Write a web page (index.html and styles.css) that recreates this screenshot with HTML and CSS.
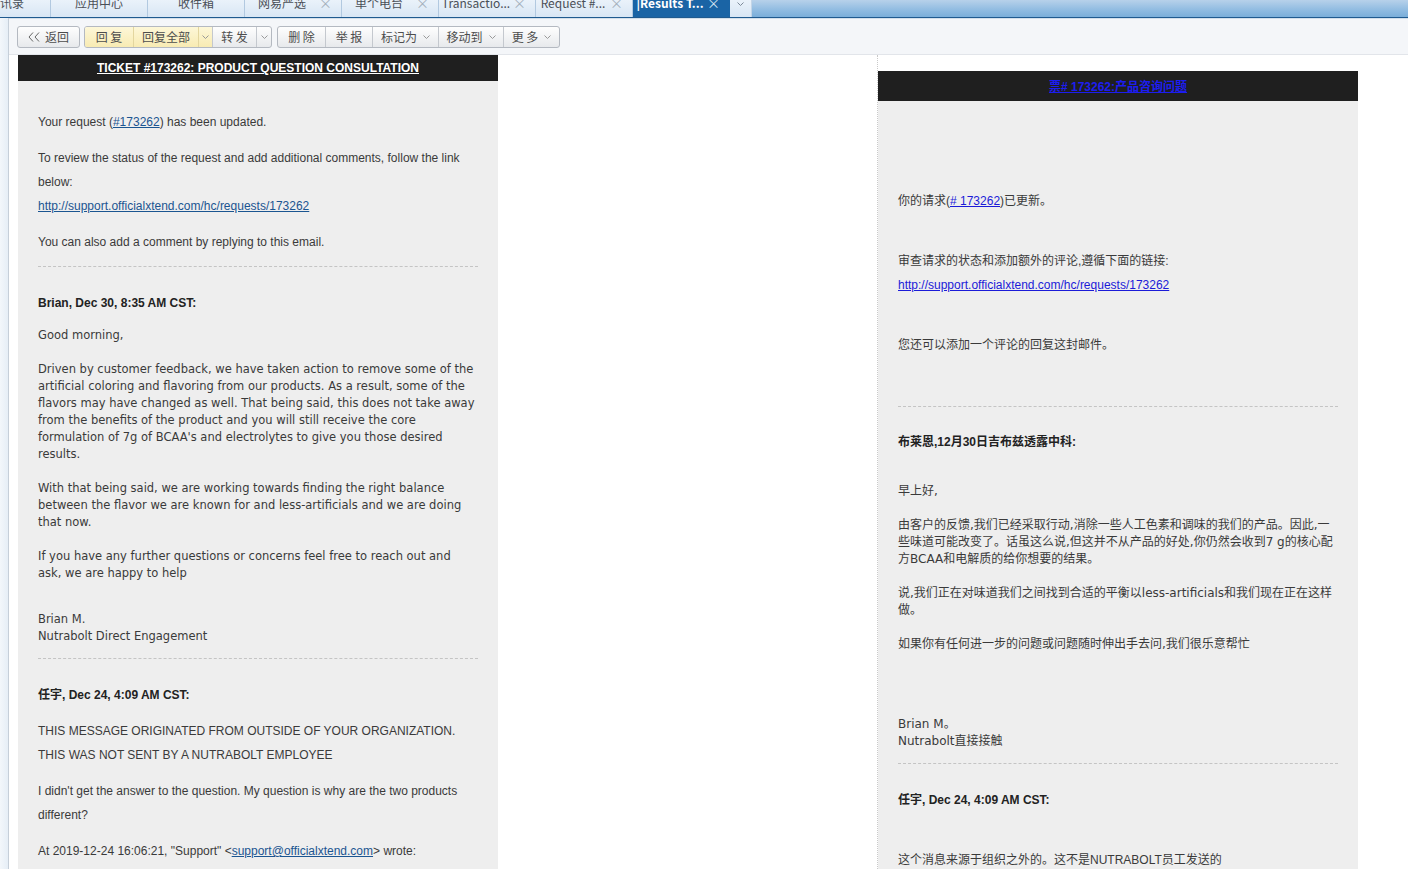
FILE: index.html
```html
<!DOCTYPE html>
<html lang="zh-CN">
<head>
<meta charset="utf-8">
<title>邮件 - Results</title>
<link rel="stylesheet" href="styles.css">
</head>
<body>
<div class="tabs">
  <div class="tab tab-first"><span>讯录</span></div>
  <div class="tab"><span>应用中心</span></div>
  <div class="tab"><span>收件箱</span></div>
  <div class="tab closable"><span>网易严选</span><i>×</i></div>
  <div class="tab closable"><span>单个电台</span><i>×</i></div>
  <div class="tab closable"><span>Transactio...</span><i>×</i></div>
  <div class="tab closable"><span>Request #...</span><i>×</i></div>
  <div class="tab closable active"><span>|Results T...</span><i>×</i></div>
  <div class="tab tab-more"><svg width="7" height="4" viewBox="0 0 7 4"><polyline points="0.5,0.5 3.5,3.5 6.5,0.5" fill="none" stroke="#7d8a98" stroke-width="1"/></svg></div>
</div>

<div class="main">
  <div class="side"></div>
  <div class="content">
    <div class="toolbar">
      <div class="grp">
        <div class="btn b-back"><svg class="ico-back" width="12" height="10" viewBox="0 0 12 10"><polyline points="5,0.5 1,5 5,9.5" fill="none" stroke="#666" stroke-width="1"/><polyline points="11,0.5 7,5 11,9.5" fill="none" stroke="#666" stroke-width="1"/></svg>返回</div>
      </div>
      <div class="grp grp-1">
        <div class="btn yel b-reply">回 复</div>
        <div class="btn yel b-replyall">回复全部</div>
        <div class="btn yel b-caret"><svg width="7" height="4" viewBox="0 0 7 4"><polyline points="0.5,0.5 3.5,3.5 6.5,0.5" fill="none" stroke="#999" stroke-width="1"/></svg></div>
        <div class="btn b-fwd">转 发</div>
        <div class="btn b-caret2"><svg width="7" height="4" viewBox="0 0 7 4"><polyline points="0.5,0.5 3.5,3.5 6.5,0.5" fill="none" stroke="#999" stroke-width="1"/></svg></div>
      </div>
      <div class="grp grp-2">
        <div class="btn b-del">删 除</div>
        <div class="btn b-report">举 报</div>
        <div class="btn b-mark">标记为<svg class="caret" width="7" height="4" viewBox="0 0 7 4"><polyline points="0.5,0.5 3.5,3.5 6.5,0.5" fill="none" stroke="#999" stroke-width="1"/></svg></div>
        <div class="btn b-move">移动到<svg class="caret" width="7" height="4" viewBox="0 0 7 4"><polyline points="0.5,0.5 3.5,3.5 6.5,0.5" fill="none" stroke="#999" stroke-width="1"/></svg></div>
        <div class="btn b-more">更 多<svg class="caret" width="7" height="4" viewBox="0 0 7 4"><polyline points="0.5,0.5 3.5,3.5 6.5,0.5" fill="none" stroke="#999" stroke-width="1"/></svg></div>
      </div>
    </div>

    <div class="mails">
      <div class="mail mail-l">
        <div class="hd"><a href="#">TICKET #173262: PRODUCT QUESTION CONSULTATION</a></div>
        <div class="bd">
          <p class="s l-first">Your request (<a href="#">#173262</a>) has been updated.</p>
          <p class="s l-next">To review the status of the request and add additional comments, follow the link below:<br><a href="#">http://support.officialxtend.com/hc/requests/173262</a></p>
          <p class="s l-next">You can also add a comment by replying to this email.</p>
          <hr class="dash l-hr1">
          <p class="s b l-author">Brian, Dec 30, 8:35 AM CST:</p>
          <div class="msg l-msg">
            <p>Good morning,</p>
            <p>Driven by customer feedback, we have taken action to remove some of the<br>artificial coloring and flavoring from our products. As a result, some of the<br>flavors may have changed as well. That being said, this does not take away<br>from the benefits of the product and you will still receive the core<br>formulation of 7g of BCAA's and electrolytes to give you those desired<br>results.</p>
            <p>With that being said, we are working towards finding the right balance<br>between the flavor we are known for and less-artificials and we are doing<br>that now.</p>
            <p>If you have any further questions or concerns feel free to reach out and<br>ask, we are happy to help</p>
            <p class="sig-l">Brian M.<br>Nutrabolt Direct Engagement</p>
          </div>
          <hr class="dash l-hr2">
          <p class="s b l-author">任宇, Dec 24, 4:09 AM CST:</p>
          <p class="s l-next">THIS MESSAGE ORIGINATED FROM OUTSIDE OF YOUR ORGANIZATION.<br>THIS WAS NOT SENT BY A NUTRABOLT EMPLOYEE</p>
          <p class="s l-next">I didn't get the answer to the question. My question is why are the two products different?</p>
          <p class="s l-next">At 2019-12-24 16:06:21, "Support" &lt;<a href="#">support@officialxtend.com</a>&gt; wrote:</p>
        </div>
      </div>

      <div class="split">
        <div class="mail mail-r">
          <div class="hd"><a href="#">票# 173262:产品咨询问题</a></div>
          <div class="bd">
            <p class="s r-first">你的请求(<a href="#"># 173262</a>)已更新。</p>
            <p class="s r-next">审查请求的状态和添加额外的评论,遵循下面的链接:<br><a href="#">http://support.officialxtend.com/hc/requests/173262</a></p>
            <p class="s r-next">您还可以添加一个评论的回复这封邮件。</p>
            <hr class="dash r-hr1">
            <p class="s b r-author1">布莱恩,12月30日吉布兹透露中科:</p>
            <div class="msg r-msg">
              <p>早上好,</p>
              <p>由客户的反馈,我们已经采取行动,消除一些人工色素和调味的我们的产品。因此,一<br>些味道可能改变了。话虽这么说,但这并不从产品的好处,你仍然会收到7 g的核心配<br>方BCAA和电解质的给你想要的结果。</p>
              <p>说,我们正在对味道我们之间找到合适的平衡以less-artificials和我们现在正在这样<br>做。</p>
              <p>如果你有任何进一步的问题或问题随时伸出手去问,我们很乐意帮忙</p>
              <p class="sig-r">Brian M。<br>Nutrabolt直接接触</p>
            </div>
            <hr class="dash r-hr2">
            <p class="s b r-author2">任宇, Dec 24, 4:09 AM CST:</p>
            <p class="s r-next">这个消息来源于组织之外的。这不是NUTRABOLT员工发送的</p>
          </div>
        </div>
      </div>
    </div>
  </div>
</div>
</body>
</html>
```
FILE: styles.css
```css
html, body {
  margin: 0;
  padding: 0;
  height: 869px;
  overflow: hidden;
  background: #ffffff;
}
body {
  font-family: "Liberation Sans", "Noto Sans CJK SC", sans-serif;
  color: #333333;
}

/* ---------- tab bar ---------- */
.tabs {
  display: flex;
  height: 17px;
  border-bottom: 1px solid #1f5a8f;
  background: linear-gradient(to bottom, #b7d1ea 0%, #8fbbe1 60%, #7aaed9 100%);
  overflow: hidden;
}
.tab {
  box-sizing: border-box;
  width: 97px;
  height: 17px;
  flex: none;
  display: flex;
  align-items: flex-start;
  border-right: 1px solid #b2c9e0;
  background: linear-gradient(to bottom, #eaf2fa, #d8e6f4);
  font-family: "Noto Sans CJK SC", "Liberation Sans", sans-serif;
  font-size: 12px;
  color: #4a4f57;
  overflow: hidden;
}
.tab span {
  flex: 1;
  text-align: center;
  line-height: 16px;
  margin-top: -5px;
  white-space: nowrap;
  overflow: hidden;
}
.tab i {
  font-style: normal;
  width: 22px;
  flex: none;
  line-height: 16px;
  margin-top: -5px;
  font-size: 13px;
  color: #a3aebb;
  text-align: left;
}
.tab-first {
  width: 51px;
}
.tab-first span {
  text-align: right;
  padding-right: 29px;
}
.tab.active {
  background: #1a64a5;
  color: #ffffff;
  font-weight: bold;
  border-right-color: #1a64a5;
}
.tab.active i {
  color: #d6e4f2;
  font-weight: normal;
}
.tab-more {
  width: 22px;
  justify-content: center;
  align-items: flex-start;
  padding-top: 2px;
  border-right: 1px solid #c3d5e7;
}

/* ---------- main frame ---------- */
.main {
  display: flex;
  height: 851px;
}
.side {
  width: 8px;
  flex: none;
  border-right: 1px solid #c6cfd9;
  background: linear-gradient(to right, #f3f7fb, #e6eef6);
}
.content {
  flex: 1;
  display: flex;
  flex-direction: column;
  min-width: 0;
}

/* ---------- toolbar ---------- */
.toolbar {
  box-sizing: border-box;
  height: 37px;
  flex: none;
  display: flex;
  align-items: flex-start;
  gap: 4px;
  padding: 7px 0 0 8px;
  border-top: 1px solid #d3dfea;
  border-bottom: 1px solid #e2e5ea;
  background: #f4f6f9;
}
.grp {
  display: flex;
  height: 20px;
  border: 1px solid #b4b9c1;
  border-radius: 3px;
  overflow: hidden;
  background: linear-gradient(to bottom, #fefefe, #e7e9ec);
}
.grp-2 {
  margin-left: 1px;
}
.btn {
  box-sizing: border-box;
  height: 20px;
  display: flex;
  align-items: center;
  justify-content: center;
  font-family: "Noto Sans CJK SC", "Liberation Sans", sans-serif;
  font-size: 12px;
  line-height: 20px;
  color: #4d4d4d;
  white-space: nowrap;
}
.btn + .btn {
  border-left: 1px solid #c4c8ce;
}
.btn.yel {
  background: linear-gradient(to bottom, #fdf7d8, #f8ebb3);
}
.btn.yel + .btn.yel {
  border-left-color: #e3d69f;
}
.ico-back {
  margin-right: 5px;
}
.caret {
  margin-left: 6px;
}
.b-back { width: 61px; }
.b-reply { width: 48px; }
.b-replyall { width: 65px; }
.b-caret { width: 14px; }
.b-fwd { width: 44px; }
.b-caret2 { width: 15px; }
.b-del { width: 47px; }
.b-report { width: 47px; }
.b-mark { width: 66px; }
.b-move { width: 65px; }
.b-more { width: 56px; }

/* ---------- mails ---------- */
.mails {
  flex: 1;
  display: flex;
  align-items: stretch;
  min-height: 0;
}
.mail {
  width: 480px;
  flex: none;
  display: flex;
  flex-direction: column;
}
.mail-l {
  margin-left: 9px;
}
.split {
  margin-left: 379px;
  border-left: 1px dotted #c9c9c9;
}
.mail-r {
  margin-top: 16px;
  height: 800px;
}
.hd {
  background: #1f1f1f;
  text-align: center;
}
.mail-l .hd {
  height: 26px;
  line-height: 23px;
}
.mail-l .hd a {
  color: #ffffff;
  font-weight: bold;
  font-size: 12px;
  text-decoration: underline;
}
.mail-r .hd {
  height: 30px;
  line-height: 30px;
}
.mail-r .hd a {
  color: #1d1df0;
  font-weight: bold;
  font-size: 12px;
  text-decoration: underline;
}
.bd {
  flex: 1;
  background: #eeeeee;
  padding: 1px 20px 0;
  overflow: hidden;
}
.bd p {
  margin: 0;
}
.s {
  font-size: 12px;
  line-height: 24px;
  color: #3a3a3a;
}
.s.b {
  font-weight: bold;
  color: #222222;
}
.mail-l .s a {
  color: #1b5591;
}
.mail-r .s a {
  color: #1b1bd8;
}
.dash {
  border: 0;
  border-top: 1px dashed #c4c4c4;
  height: 0;
  margin: 0;
}
.msg {
  font-family: "DejaVu Sans", "Noto Sans CJK SC", sans-serif;
  font-size: 11.5px;
  line-height: 17px;
  color: #3a3a3a;
}
.msg p {
  white-space: nowrap;
}
.msg p + p {
  margin-top: 17px;
}
.r-msg {
  font-size: 12px;
}

/* left vertical rhythm */
.l-first { margin-top: 28px !important; }
.l-next { margin-top: 12px !important; }
.l-hr1 { margin-top: 12px; }
.l-author { margin-top: 24px !important; }
.l-msg { margin-top: 12px; }
.msg p.sig-l { margin-top: 29px; }
.l-hr2 { margin-top: 13px; }

/* right vertical rhythm */
.r-first { margin-top: 87px !important; }
.r-next { margin-top: 36px !important; }
.r-hr1 { margin-top: 49px; }
.r-author1 { margin-top: 23px !important; }
.r-msg { margin-top: 29px; }
.msg p.sig-r { margin-top: 63px; }
.r-hr2 { margin-top: 13px; }
.r-author2 { margin-top: 24px !important; }
```
